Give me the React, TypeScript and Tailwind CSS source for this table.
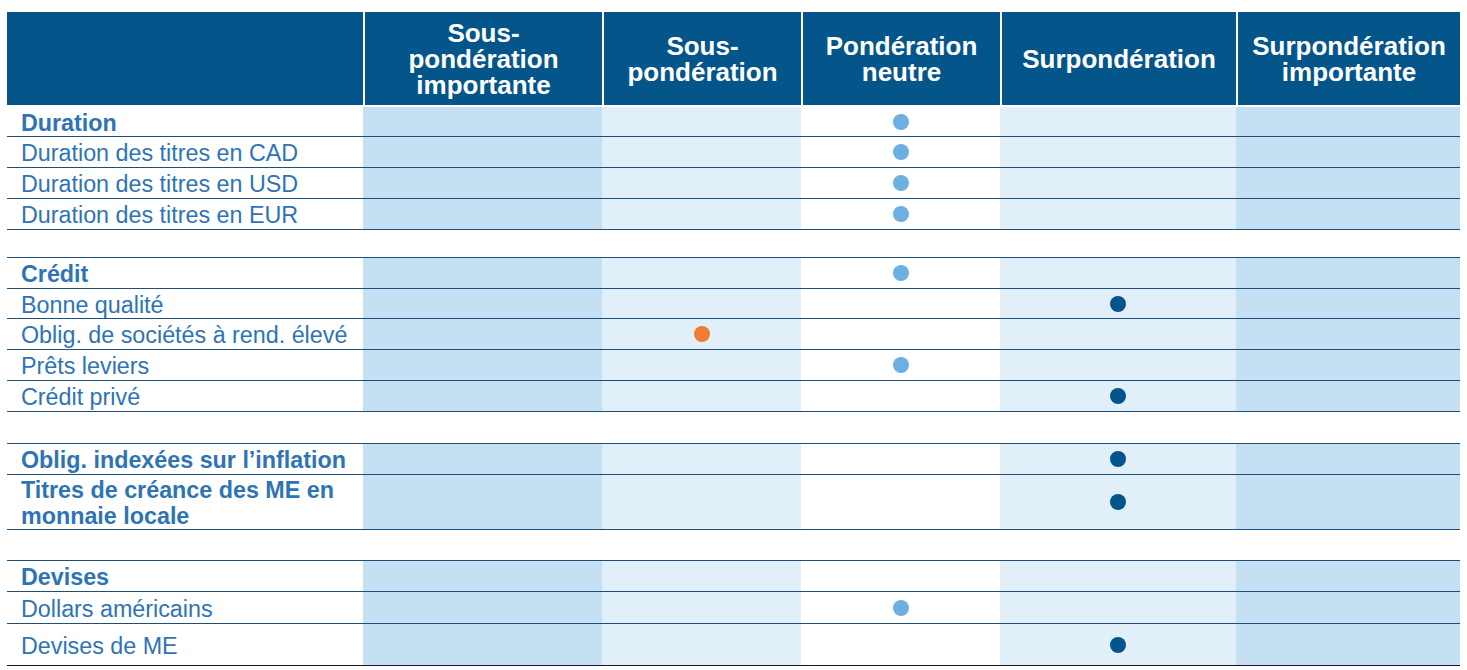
const cols = 'grid grid-cols-[356px_239px_199px_199px_236px_224px]';

const bgs = ['bg-white', 'bg-[#c5e0f3]', 'bg-[#e1eff9]', 'bg-white', 'bg-[#e1eff9]', 'bg-[#c5e0f3]'];

const dotColors = {
  light: 'bg-[#6cb0e1]',
  navy: 'bg-[#03548a]',
  orange: 'bg-[#ef7d31]',
};

type Dot = keyof typeof dotColors;

interface Row {
  label?: string;
  bold?: boolean;
  col?: number;
  dot?: Dot;
  h: string;
  last?: boolean;
}

const rows: Row[] = [
  { label: 'Duration', bold: true, col: 3, dot: 'light', h: 'h-[30px] mt-[2px]' },
  { label: 'Duration des titres en CAD', col: 3, dot: 'light', h: 'h-[31px]' },
  { label: 'Duration des titres en USD', col: 3, dot: 'light', h: 'h-[31px]' },
  { label: 'Duration des titres en EUR', col: 3, dot: 'light', h: 'h-[31px]' },
  { h: 'h-[28px]' },
  { label: 'Crédit', bold: true, col: 3, dot: 'light', h: 'h-[31px]' },
  { label: 'Bonne qualité', col: 4, dot: 'navy', h: 'h-[30px]' },
  { label: 'Oblig. de sociétés à rend. élevé', col: 2, dot: 'orange', h: 'h-[31px]' },
  { label: 'Prêts leviers', col: 3, dot: 'light', h: 'h-[31px]' },
  { label: 'Crédit privé', col: 4, dot: 'navy', h: 'h-[31px]' },
  { h: 'h-[32px]' },
  { label: 'Oblig. indexées sur l’inflation', bold: true, col: 4, dot: 'navy', h: 'h-[31px]' },
  { label: 'Titres de créance des ME en monnaie locale', bold: true, col: 4, dot: 'navy', h: 'h-[55px]' },
  { h: 'h-[31px]' },
  { label: 'Devises', bold: true, h: 'h-[31px]' },
  { label: 'Dollars américains', col: 3, dot: 'light', h: 'h-[32px]' },
  { label: 'Devises de ME', col: 4, dot: 'navy', h: 'h-[42px]', last: true },
];

const headers = [
  ['Sous-', 'pondération', 'importante'],
  ['Sous-', 'pondération'],
  ['Pondération', 'neutre'],
  ['Surpondération'],
  ['Surpondération', 'importante'],
];

function BodyRow({ row }: { row: Row }) {
  const border = row.last ? 'border-[#111827]' : 'border-[#1f4e79]';
  if (!row.label) {
    return <div className={`${row.h} border-b ${border} bg-white`} />;
  }
  return (
    <div className={`${cols} ${row.h} border-b ${border} overflow-hidden`}>
      <div
        className={`flex items-center pl-[14px] pt-[2px] text-[23.3px] leading-[26px] text-[#2e74b5] ${
          row.bold ? 'font-bold' : ''
        }`}
      >
        {row.label}
      </div>
      {[1, 2, 3, 4, 5].map((i) => (
        <div key={i} className={`flex items-center justify-center ${bgs[i]}`}>
          {row.col === i && row.dot && (
            <span className={`block h-4 w-4 rounded-full ${dotColors[row.dot]}`} />
          )}
        </div>
      ))}
    </div>
  );
}

export default function App() {
  return (
    <div className="min-h-screen bg-white pl-[7px] pt-[12px] font-['Liberation_Sans',Arial,sans-serif]">
      <div className="w-[1453px]">
        <div className={`${cols} h-[93px]`}>
          <div className="bg-[#03558a]" />
          {headers.map((lines, i) => (
            <div
              key={i}
              className="flex items-center justify-center border-l-2 border-white bg-[#03558a] text-center text-[26px] font-bold leading-[26px] text-white"
            >
              <p>
                {lines.map((l, j) => (
                  <span key={l}>
                    {j > 0 && <br />}
                    {l}
                  </span>
                ))}
              </p>
            </div>
          ))}
        </div>
        {rows.map((row, i) => (
          <BodyRow key={i} row={row} />
        ))}
      </div>
    </div>
  );
}
